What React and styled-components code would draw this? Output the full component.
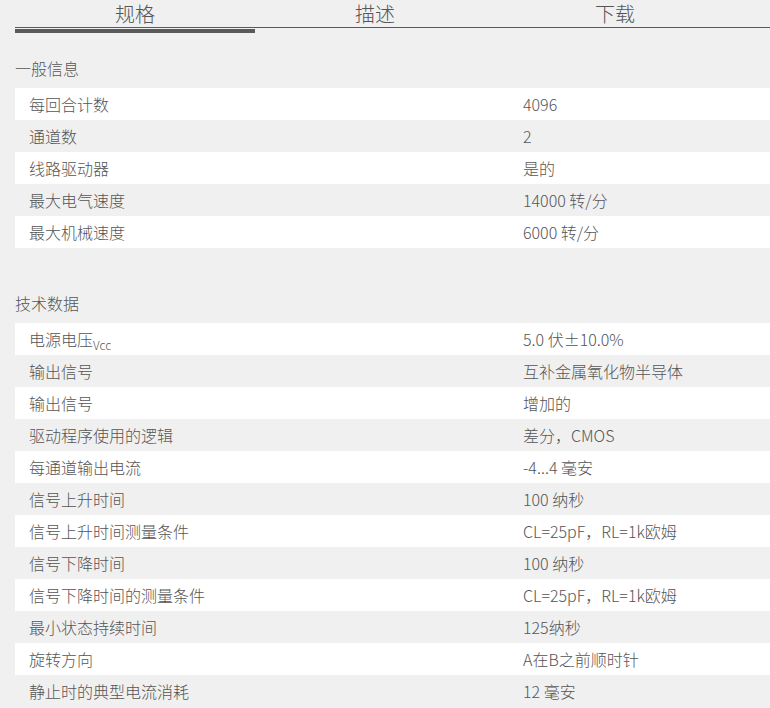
import React from "react";
import styled, { createGlobalStyle } from "styled-components";

const GlobalStyle = createGlobalStyle`
  html, body {
    margin: 0;
    padding: 0;
    background: #f0f0f0;
    overflow: hidden;
  }
  body {
    font-family: "Noto Sans CJK SC", "Noto Sans", "Liberation Sans", sans-serif;
    font-weight: 300;
    color: #555;
  }
`;

const Page = styled.div`
  width: 770px;
  height: 708px;
  padding-left: 15px;
  box-sizing: border-box;
  overflow: hidden;
`;

const TabBar = styled.div`
  display: flex;
  border-bottom: 1px solid #5a5a5a;
  margin-bottom: 6px;
`;

const Tab = styled.div`
  position: relative;
  width: 240px;
  height: 27px;
  line-height: 28px;
  font-size: 20px;
  font-weight: 300;
  text-align: center;
  color: #555;

  ${(p) =>
    p.$active &&
    `
    &::after {
      content: "";
      position: absolute;
      left: 0;
      right: 0;
      bottom: -6px;
      height: 4px;
      background: #5a5a5a;
    }
  `}
`;

const Section = styled.section`
  padding-top: 23px;
  & + & {
    margin-top: 21px;
  }
`;

const Heading = styled.h3`
  margin: 0 0 9px;
  font-size: 16px;
  font-weight: 300;
  line-height: 22px;
  color: #555;
`;

const Row = styled.div`
  display: grid;
  grid-template-columns: 494px 1fr;
  height: 32px;
  line-height: 32px;
  padding-left: 14px;
  font-size: 16px;
  font-weight: 300;
  color: #555;
  background: ${(p) => (p.$striped ? "#ffffff" : "#f0f0f0")};
`;

const Cell = styled.div`
  white-space: nowrap;
`;

const Sub = styled.span`
  font-size: 12px;
  vertical-align: -4px;
  line-height: 0;
`;

const general = [
  ["每回合计数", "4096"],
  ["通道数", "2"],
  ["线路驱动器", "是的"],
  ["最大电气速度", "14000 转/分"],
  ["最大机械速度", "6000 转/分"],
];

const technical = [
  [
    <>
      电源电压<Sub>Vcc</Sub>
    </>,
    "5.0 伏±10.0%",
  ],
  ["输出信号", "互补金属氧化物半导体"],
  ["输出信号", "增加的"],
  ["驱动程序使用的逻辑", "差分，CMOS"],
  ["每通道输出电流", "-4...4 毫安"],
  ["信号上升时间", "100 纳秒"],
  ["信号上升时间测量条件", "CL=25pF，RL=1k欧姆"],
  ["信号下降时间", "100 纳秒"],
  ["信号下降时间的测量条件", "CL=25pF，RL=1k欧姆"],
  ["最小状态持续时间", "125纳秒"],
  ["旋转方向", "A在B之前顺时针"],
  ["静止时的典型电流消耗", "12 毫安"],
];

function SpecSection({ title, rows }) {
  return (
    <Section>
      <Heading>{title}</Heading>
      {rows.map(([k, v], i) => (
        <Row key={i} $striped={i % 2 === 0}>
          <Cell>{k}</Cell>
          <Cell>{v}</Cell>
        </Row>
      ))}
    </Section>
  );
}

export default function App() {
  return (
    <>
      <GlobalStyle />
      <Page>
        <TabBar>
          <Tab $active>规格</Tab>
          <Tab>描述</Tab>
          <Tab>下载</Tab>
        </TabBar>
        <SpecSection title="一般信息" rows={general} />
        <SpecSection title="技术数据" rows={technical} />
      </Page>
    </>
  );
}
